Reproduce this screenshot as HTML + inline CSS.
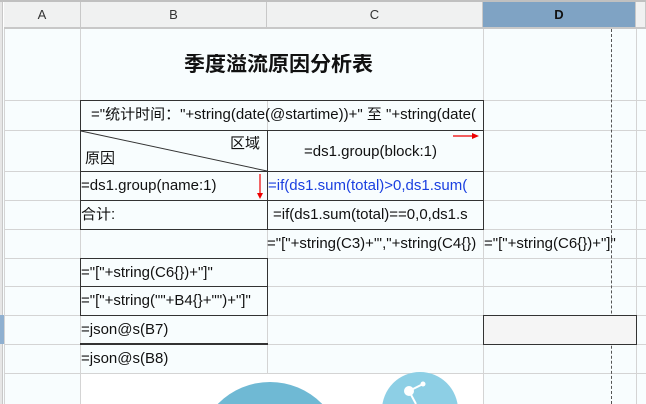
<!DOCTYPE html>
<html><head><meta charset="utf-8"><style>
*{margin:0;padding:0;box-sizing:border-box}
body{width:646px;height:404px;overflow:hidden;background:#fff;position:relative;font-family:"Liberation Sans","Noto Sans CJK SC",sans-serif;font-size:15px;color:#111}
div{position:absolute}
.h{background:#f0f1f1;border-right:1px solid #c8c8c8;border-bottom:2px solid #c8c8c8;text-align:center;line-height:25px;font-size:13px;color:#333;top:2px;height:27px}
.vl{background:#d4d4d4;width:1px}
.hl{background:#d4d4d4;height:1px}
.t{white-space:nowrap;overflow:hidden;line-height:1}
.bx{border:1.5px solid #333}
</style></head><body>
<div style="left:0;top:0;width:646px;height:2px;background:#c0c0c0"></div>
<div style="left:0;top:29px;width:646px;height:375px;background:#f8fdfe"></div>
<div class="h" style="left:4px;width:77px">A</div>
<div class="h" style="left:81px;width:186px">B</div>
<div class="h" style="left:267px;width:216px">C</div>
<div class="h" style="left:483px;width:153px;background:#7fa3c4;font-weight:bold;color:#111">D</div>
<div class="h" style="left:636px;width:10px"></div>
<div style="left:0;top:2px;width:3px;height:402px;background:#e6e6e6;border-right:1px solid #c8c8c8"></div>
<div style="left:0;top:315px;width:4px;height:29px;background:#8fb0d0"></div>
<div class="vl" style="left:4px;top:29px;height:375px"></div>
<div class="vl" style="left:80px;top:29px;height:375px"></div>
<div class="vl" style="left:267px;top:100px;height:273px"></div>
<div class="vl" style="left:483px;top:29px;height:375px"></div>
<div class="vl" style="left:636px;top:29px;height:375px"></div>
<div class="hl" style="left:4px;top:100px;width:77px"></div>
<div class="hl" style="left:483px;top:100px;width:163px"></div>
<div class="hl" style="left:4px;top:130px;width:642px"></div>
<div class="hl" style="left:4px;top:171px;width:642px"></div>
<div class="hl" style="left:4px;top:200px;width:642px"></div>
<div class="hl" style="left:4px;top:229px;width:642px"></div>
<div class="hl" style="left:4px;top:258px;width:642px"></div>
<div class="hl" style="left:4px;top:286px;width:642px"></div>
<div class="hl" style="left:4px;top:315px;width:642px"></div>
<div class="hl" style="left:4px;top:344px;width:642px"></div>
<div class="hl" style="left:4px;top:373px;width:642px"></div>
<div style="left:81px;top:374px;width:402px;height:30px;background:#fff"></div>
<div style="left:611px;top:29px;width:0;height:375px;border-left:1px dashed #555"></div>
<div class="bx" style="left:80px;top:100px;width:404px;height:31px"></div>
<div class="bx" style="left:80px;top:130px;width:188px;height:42px"></div>
<div class="bx" style="left:267px;top:130px;width:217px;height:42px"></div>
<div class="bx" style="left:80px;top:171px;width:188px;height:30px"></div>
<div class="bx" style="left:267px;top:171px;width:217px;height:30px"></div>
<div class="bx" style="left:80px;top:200px;width:188px;height:30px"></div>
<div class="bx" style="left:267px;top:200px;width:217px;height:30px"></div>
<div class="bx" style="left:80px;top:258px;width:188px;height:29px"></div>
<div class="bx" style="left:80px;top:286px;width:188px;height:30px"></div>
<div style="left:80px;top:343px;width:188px;height:2px;background:#333"></div>
<div class="bx" style="left:483px;top:315px;width:154px;height:30px;background:#f5f5f5"></div>
<svg style="position:absolute;left:0;top:0" width="646" height="404">
<line x1="81" y1="131" x2="267" y2="171" stroke="#333" stroke-width="1"/>
<line x1="260" y1="174" x2="260" y2="197" stroke="#e00" stroke-width="1.2"/>
<path d="M257 193 L260 199 L263 193Z" fill="#e00"/>
<line x1="453" y1="136" x2="475" y2="136" stroke="#e00" stroke-width="1.2"/>
<path d="M472 133 L479 136 L472 139Z" fill="#e00"/>
<circle cx="270" cy="455" r="73" fill="#6fb9d4"/>
<circle cx="420" cy="410" r="38" fill="#8dcfe5"/>
<circle cx="409" cy="391" r="5" fill="#fff"/>
<circle cx="423" cy="384" r="2.5" fill="#fff"/>
<line x1="409" y1="391" x2="423" y2="384" stroke="#fff" stroke-width="2"/>
<line x1="409" y1="391" x2="416" y2="404" stroke="#fff" stroke-width="2"/>
</svg>
<div class="t" style="left:184px;top:54px;font-size:21px;font-weight:bold">季度溢流原因分析表</div>
<div class="t" style="left:91px;top:107px;width:392px">="统计时间："+string(date(@startime))+" 至 "+string(date(</div>
<div class="t" style="left:230px;top:136px">区域</div>
<div class="t" style="left:85px;top:151px">原因</div>
<div class="t" style="left:304px;top:144px">=ds1.group(block:1)</div>
<div class="t" style="left:81px;top:178px">=ds1.group(name:1)</div>
<div class="t" style="left:268px;top:178px;width:215px;color:#1a3fe0">=if(ds1.sum(total)&gt;0,ds1.sum(</div>
<div class="t" style="left:81px;top:207px">合计:</div>
<div class="t" style="left:273px;top:207px;width:210px">=if(ds1.sum(total)==0,0,ds1.s</div>
<div class="t" style="left:267px;top:236px;width:216px">="["+string(C3)+"',"+string(C4{})</div>
<div class="t" style="left:484px;top:236px">="["+string(C6{})+"]"</div>
<div class="t" style="left:81px;top:265px">="["+string(C6{})+"]"</div>
<div class="t" style="left:81px;top:293px">="["+string(""+B4{}+"")+"]"</div>
<div class="t" style="left:81px;top:322px">=json@s(B7)</div>
<div class="t" style="left:81px;top:351px">=json@s(B8)</div>
</body></html>
